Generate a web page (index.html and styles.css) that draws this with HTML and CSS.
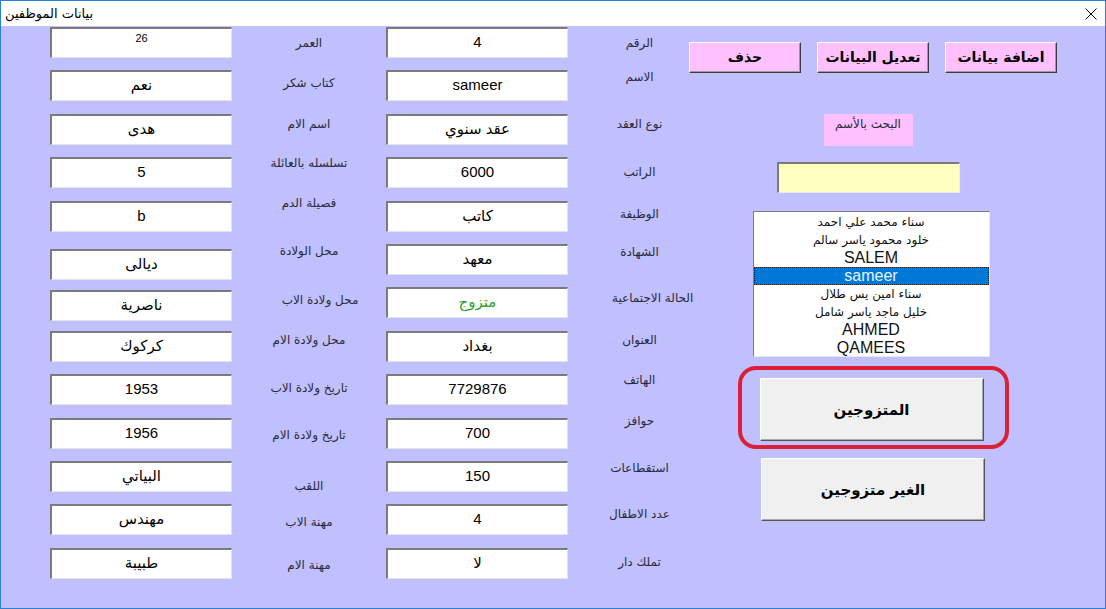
FILE: index.html
```html
<!DOCTYPE html>
<html lang="ar">
<head>
<meta charset="utf-8">
<title>بيانات الموظفين</title>
<link rel="stylesheet" href="styles.css">
</head>
<body>
<div class="window">
  <div class="titlebar">
    <span class="title">بيانات الموظفين</span>
    <svg class="close" width="12" height="12" viewBox="0 0 12 12"><path d="M0.5 0.5 L11.5 11.5 M11.5 0.5 L0.5 11.5" stroke="#000" stroke-width="1" fill="none"/></svg>
  </div>
  <div class="client">
    <div class="panel">
      <div class="actions">
        <div class="pbtn">حذف</div>
        <div class="pbtn">تعديل البيانات</div>
        <div class="pbtn">اضافة بيانات</div>
      </div>
      <div class="search-label">البحث بالأسم</div>
      <div class="search-input"></div>
      <div class="listbox">
        <div class="item ar">سناء محمد علي احمد</div>
        <div class="item ar">خلود محمود ياسر سالم</div>
        <div class="item">SALEM</div>
        <div class="item sel">sameer</div>
        <div class="item ar">سناء امين يس طلال</div>
        <div class="item ar">خليل ماجد ياسر شامل</div>
        <div class="item">AHMED</div>
        <div class="item">QAMEES</div>
      </div>
      <div class="ring">
        <div class="bigbtn">المتزوجين</div>
      </div>
      <div class="bigbtn second">الغير متزوجين</div>
    </div>

    <div class="field small">26</div><div class="lbl m8">العمر</div><div class="field">4</div><div class="lbl mid m8">الرقم</div>
    <div class="field">نعم</div><div class="lbl m5">كتاب شكر</div><div class="field">sameer</div><div class="lbl mid mn1">الاسم</div>
    <div class="field">هدى</div><div class="lbl m2">اسم الام</div><div class="field">عقد سنوي</div><div class="lbl mid m2">نوع العقد</div>
    <div class="field">5</div><div class="lbl mn2">تسلسله بالعائلة</div><div class="field">6000</div><div class="lbl mid m7">الراتب</div>
    <div class="field">b</div><div class="lbl mn6">فصيلة الدم</div><div class="field">كاتب</div><div class="lbl mid m5">الوظيفة</div>
    <div class="field low5">ديالى</div><div class="lbl mn1">محل الولادة</div><div class="field">معهد</div><div class="lbl mid m0">الشهادة</div>
    <div class="field low3">ناصرية</div><div class="lbl m5 shift">محل ولادة الاب</div><div class="field green">متزوج</div><div class="lbl mid m3 shift">الحالة الاجتماعية</div>
    <div class="field">كركوك</div><div class="lbl m1">محل ولادة الام</div><div class="field">بغداد</div><div class="lbl mid m1">العنوان</div>
    <div class="field">1953</div><div class="lbl m6">تاريخ ولادة الاب</div><div class="field">7729876</div><div class="lbl mid mn2">الهاتف</div>
    <div class="field">1956</div><div class="lbl m9">تاريخ ولادة الام</div><div class="field">700</div><div class="lbl mid mn5">حوافز</div>
    <div class="field">البياتي</div><div class="lbl m17">اللقب</div><div class="field">150</div><div class="lbl mid mn1">استقطاعات</div>
    <div class="field">مهندس</div><div class="lbl m10">مهنة الاب</div><div class="field">4</div><div class="lbl mid m2">عدد الاطفال</div>
    <div class="field">طبيبة</div><div class="lbl m9">مهنة الام</div><div class="field">لا</div><div class="lbl mid m6">تملك دار</div>
  </div>
</div>
</body>
</html>
```
FILE: styles.css
```css
* { box-sizing: border-box; }

body {
  margin: 0;
  font-family: "Liberation Sans", "DejaVu Sans", sans-serif;
  color: #000;
}

.window {
  width: 1106px;
  height: 609px;
  border: 1px solid #2a7fd6;
  display: flex;
  flex-direction: column;
  background: #c0c0ff;
  overflow: hidden;
}

.titlebar {
  height: 25px;
  flex: none;
  background: #fff;
  display: flex;
  align-items: center;
  justify-content: space-between;
  padding: 0 8px 0 4px;
  font-family: "DejaVu Sans", sans-serif;
  font-size: 13px;
}

.close { display: block; }

.client {
  flex: 1;
  display: grid;
  grid-template-columns: 182px 154px 182px 121px 368px;
  grid-template-rows: repeat(13, 31px);
  row-gap: 12.42px;
  align-content: start;
  padding: 1px 0 0 49px;
}

.field {
  height: 31px;
  align-self: start;
  background: #fff;
  border-style: solid;
  border-width: 2px 1px 1px 2px;
  border-color: #7b7b7b #e4e4e4 #e4e4e4 #7b7b7b;
  text-align: center;
  font-size: 15px;
  line-height: 20px;
  padding-top: 3px;
  white-space: nowrap;
}
.field.small { font-size: 11px; line-height: 14px; padding-top: 2px; }
.field.green { color: #2f9e2f; }
.field.low5 { margin-top: 5px; }
.field.low3 { margin-top: 3px; }

.lbl {
  align-self: start;
  font-family: "DejaVu Sans", sans-serif;
  font-size: 12px;
  line-height: 16px;
  color: #2a2a3a;
  text-align: center;
  white-space: nowrap;
}
.lbl.mid { padding-left: 22px; }
.lbl.shift { padding-left: 22px; }
.lbl.mid.shift { padding-left: 44px; }

.mn6 { margin-top: -6px; }
.mn5 { margin-top: -5px; }
.mn2 { margin-top: -2px; }
.mn1 { margin-top: -1px; }
.m0 { margin-top: 0; }
.m1 { margin-top: 1px; }
.m2 { margin-top: 2px; }
.m3 { margin-top: 3px; }
.m5 { margin-top: 5px; }
.m6 { margin-top: 6px; }
.m7 { margin-top: 7px; }
.m8 { margin-top: 8px; }
.m9 { margin-top: 9px; }
.m10 { margin-top: 10px; }
.m17 { margin-top: 17px; }

.panel {
  grid-column: 5;
  grid-row: 1 / -1;
  display: flex;
  flex-direction: column;
  align-items: center;
}

.actions {
  display: flex;
  gap: 16px;
  margin-top: 15px;
}

.pbtn {
  width: 112px;
  height: 31px;
  background: #ffc0ff;
  border: 1px solid;
  border-color: #fff #3c3c3c #3c3c3c #fff;
  box-shadow: inset -1px -1px 0 #9a9a9a;
  font-family: "DejaVu Sans", sans-serif;
  font-weight: bold;
  font-size: 14px;
  line-height: 28px;
  text-align: center;
  white-space: nowrap;
}

.search-label {
  margin-top: 41px;
  margin-right: 10px;
  width: 89px;
  height: 32px;
  background: #ffc0ff;
  font-family: "DejaVu Sans", sans-serif;
  font-size: 12px;
  line-height: 16px;
  color: #2a2a3a;
  text-align: center;
  padding-top: 2px;
}

.search-input {
  margin-top: 16px;
  margin-right: 10px;
  width: 183px;
  height: 31px;
  background: #ffffc0;
  border-style: solid;
  border-width: 2px 1px 1px 2px;
  border-color: #7b7b7b #eaeaea #eaeaea #7b7b7b;
}

.listbox {
  margin-top: 18px;
  margin-right: 4px;
  width: 237px;
  height: 146px;
  background: #fff;
  border-style: solid;
  border-width: 1px;
  border-color: #7b7b7b #e8e8e8 #e8e8e8 #7b7b7b;
  padding-top: 1px;
}

.item {
  height: 18px;
  line-height: 18px;
  font-size: 16px;
  text-align: center;
  white-space: nowrap;
  color: #111;
}
.item.ar {
  font-family: "DejaVu Sans", sans-serif;
  font-size: 12px;
}
.item.sel {
  background: #0078d7;
  color: #eaf4ff;
  outline: 1px dotted #222;
  outline-offset: -1px;
}

.ring {
  margin-top: 9px;
  width: 271px;
  height: 83px;
  border: 4px solid #dc1f3a;
  border-radius: 18px;
  padding: 8px 0 0 18px;
}

.bigbtn {
  width: 224px;
  height: 63px;
  background: #f0f0f0;
  border: 1px solid;
  border-color: #fff #555 #555 #fff;
  box-shadow: inset -1px -1px 0 #a8a8a8;
  display: flex;
  align-items: center;
  justify-content: center;
  font-family: "DejaVu Sans", sans-serif;
  font-weight: bold;
  font-size: 15px;
}
.bigbtn.second { margin-top: 9px; }
```
